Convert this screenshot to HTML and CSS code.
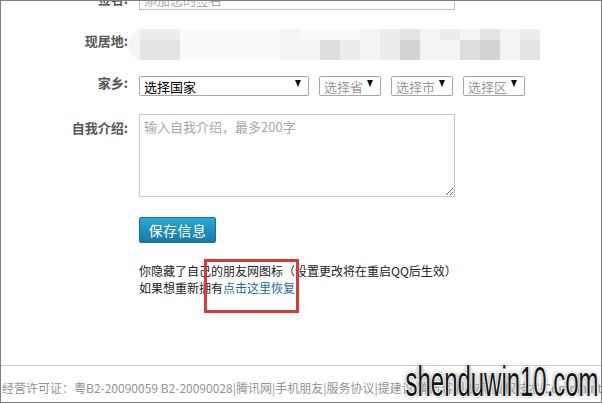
FILE: index.html
```html
<!DOCTYPE html>
<html lang="zh-CN">
<head>
    <meta charset="UTF-8">
    <meta name="viewport" content="width=device-width, initial-scale=1.0">
    <title>个人资料</title>
    <link rel="stylesheet" href="styles.css">
</head>
<body>
    <div class="page">
        <div class="profile">
            <!-- 签名 -->
            <div class="row row-sign">
                <span class="label">签名:</span>
                <input type="text" class="field text-field" placeholder="添加您的签名" />
            </div>

            <!-- 现居地 (打码) -->
            <div class="row row-home">
                <span class="label">现居地:</span>
                <div class="mosaic">
                    <i class="s2"></i><i class="s2"></i><i class="s0"></i><i class="s0"></i><i class="s0"></i>
                    <i class="s0"></i><i class="s0"></i><i class="s1"></i><i class="s0"></i><i class="s0"></i>
                    <i class="s0"></i><i class="s1"></i><i class="s2"></i><i class="s3"></i><i class="s1"></i>
                    <i class="s2"></i><i class="s1"></i><i class="s3"></i><i class="s1"></i><i class="s2"></i>

                    <i class="s3"></i><i class="s3"></i><i class="s0"></i><i class="s0"></i><i class="s0"></i>
                    <i class="s0"></i><i class="s0"></i><i class="s1"></i><i class="s1"></i><i class="s4"></i>
                    <i class="s2"></i><i class="s1"></i><i class="s2"></i><i class="s5"></i><i class="s1"></i>
                    <i class="s1"></i><i class="s4"></i><i class="s5"></i><i class="s1"></i><i class="s3"></i>
                </div>
            </div>

            <!-- 家乡 -->
            <div class="row row-town">
                <span class="label">家乡:</span>
                <div class="field picks">
                    <span class="pick pick-country">
                        <select><option>选择国家</option></select>
                    </span>
                    <span class="pick pick-small">
                        <select class="empty"><option>选择省</option></select>
                    </span>
                    <span class="pick pick-small">
                        <select class="empty"><option>选择市</option></select>
                    </span>
                    <span class="pick pick-small">
                        <select class="empty"><option>选择区</option></select>
                    </span>
                </div>
            </div>

            <!-- 自我介绍 -->
            <div class="row row-intro">
                <span class="label">自我介绍:</span>
                <textarea class="field intro" placeholder="输入自我介绍，最多200字"></textarea>
            </div>

            <div class="row row-save">
                <span class="label"></span>
                <button type="button" class="field save">保存信息</button>
            </div>

            <div class="row row-note">
                <span class="label"></span>
                <p class="field note">
                    你隐藏了自己的朋友网图标（设置更改将在重启QQ后生效）<br>
                    如果想重新拥有<a href="#">点击这里恢复</a>
                </p>
            </div>
        </div>

        <div class="foot">
            经营许可证：粤B2-20090059 B2-20090028|腾讯网|手机朋友|服务协议|提建议|腾讯客服|应用授权技术|Complaint Guidelines
        </div>

        <div class="mark-box"></div>
        <div class="watermark">shenduwin10.com</div>
    </div>
</body>
</html>
```

FILE: styles.css
```css
* {
    margin: 0;
    padding: 0;
    box-sizing: border-box;
}
body {
    font-family: "Noto Sans CJK SC", "Liberation Sans", sans-serif;
    background-color: #fff;
    color: #222;
}
.page {
    position: relative;
    width: 602px;
    height: 403px;
    border: 1px solid #7d7d7d;
    display: flex;
    flex-direction: column;
    overflow: hidden;
    background-color: #fff;
}
.profile {
    flex: 1;
    margin-top: -13px;
}
.row {
    display: flex;
    align-items: center;
}
.label {
    width: 127px;
    flex-shrink: 0;
    text-align: right;
    font-size: 13px;
    font-weight: bold;
    line-height: 20px;
    color: #555;
}
.field {
    margin-left: 11px;
}

/* 签名 */
.row-sign {
    height: 22px;
}
.text-field {
    width: 316px;
    height: 22px;
    border: 1px solid #b9c0ca;
    padding: 0 4px;
    font-family: inherit;
    font-size: 13px;
    color: #333;
}
.text-field::placeholder,
.intro::placeholder {
    color: #a8a8a8;
}

/* 现居地 */
.row-home {
    margin-top: 19px;
    height: 31px;
    align-items: flex-start;
}
.row-home .label {
    padding-top: 2px;
}
.mosaic {
    display: grid;
    grid-template-columns: repeat(20, 20px);
    grid-template-rows: 11px 20px;
    padding-left: 12px;
    background-color: #f5f5f5;
    border-radius: 16px 0 0 16px;
}
.mosaic i { display: block; }
.s0 { background-color: #fafafa; }
.s1 { background-color: #f4f4f4; }
.s2 { background-color: #ededed; }
.s3 { background-color: #e4e4e4; }
.s4 { background-color: #dddddd; }
.s5 { background-color: #d3d3d3; }

/* 家乡 */
.row-town {
    margin-top: 13px;
    height: 20px;
}
.picks {
    display: flex;
    gap: 10px;
}
.pick {
    position: relative;
    display: block;
    height: 20px;
}
.pick-country { width: 170px; }
.pick-small { width: 62px; }
.pick select {
    -webkit-appearance: none;
    appearance: none;
    width: 100%;
    height: 20px;
    border: 1px solid #a6a6a6;
    border-radius: 2px;
    background-color: #fff;
    padding-left: 4px;
    font-family: inherit;
    font-size: 13px;
    color: #000;
}
.pick select.empty {
    color: #9a9a9a;
}
.pick::after {
    content: "";
    position: absolute;
    right: 8px;
    top: 7px;
    border-left: 3.5px solid transparent;
    border-right: 3.5px solid transparent;
    border-top: 7px solid #111;
}

/* 自我介绍 */
.row-intro {
    margin-top: 21px;
    align-items: flex-start;
}
.row-intro .label {
    padding-top: 4px;
}
.intro {
    width: 316px;
    height: 83px;
    border: 1px solid #c4c9d2;
    padding: 3px 4px;
    font-family: inherit;
    font-size: 13px;
    line-height: 17px;
    color: #333;
}

/* 保存 */
.row-save {
    margin-top: 20px;
}
.save {
    width: 77px;
    height: 26px;
    border: 1px solid #17709a;
    border-radius: 2px;
    background: linear-gradient(#2aa8d4, #1a79a6);
    color: #fff;
    font-family: inherit;
    font-size: 14px;
    letter-spacing: 0.5px;
}

.row-note {
    margin-top: 19px;
    align-items: flex-start;
}
.note {
    font-size: 12px;
    line-height: 17px;
    color: #222;
}
.note a {
    color: #1d6ca6;
    text-decoration: none;
}

/* 页脚 */
.foot {
    height: 37px;
    border-top: 1px solid #cfcfcf;
    padding: 14px 0 0 1px;
    font-size: 12px;
    line-height: 16px;
    color: #939393;
    white-space: nowrap;
    overflow: hidden;
}

/* 标注框与水印 */
.mark-box {
    position: absolute;
    left: 203px;
    top: 258px;
    width: 95px;
    height: 54px;
    border: 3px solid #d6393e;
}
.watermark {
    position: absolute;
    right: 2px;
    bottom: 1px;
    font-family: "Liberation Sans", sans-serif;
    font-size: 42px;
    line-height: 38px;
    color: #151515;
    transform: scaleX(0.57);
    transform-origin: right bottom;
    text-shadow: 1px 1px 0 #fff, -1px -1px 0 #fff, 1px -1px 0 #fff, -1px 1px 0 #fff,
        0 0 3px #666, 0 0 6px #999;
}
```
